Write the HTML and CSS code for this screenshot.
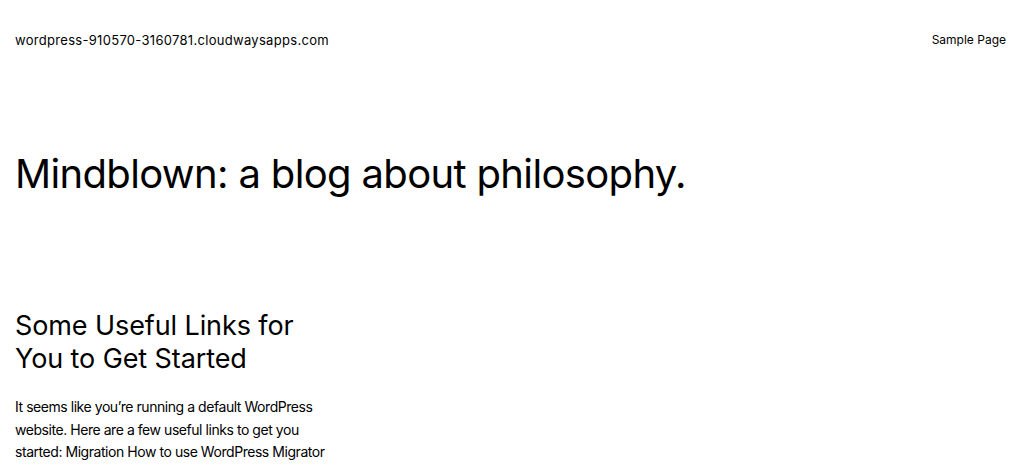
FILE: index.html
```html
<!DOCTYPE html>
<html lang="en">
<head>
<meta charset="utf-8">
<title>Mindblown</title>
<link rel="stylesheet" href="styles.css">
</head>
<body>
<header class="site-header">
  <a class="site-title" href="#">wordpress-910570-3160781.cloudwaysapps.com</a>
  <nav class="site-nav"><a href="#">Sample Page</a></nav>
</header>
<main class="content">
  <h1 class="page-title">Mindblown: a blog about philosophy.</h1>
  <article class="post">
    <h2 class="post-title">Some Useful Links for You to Get Started</h2>
    <p class="post-excerpt">It seems like you’re running a default WordPress website. Here are a few useful links to get you started: Migration How to use WordPress Migrator</p>
  </article>
</main>
</body>
</html>
```
FILE: styles.css
```css
html, body {
  margin: 0;
  padding: 0;
  background: #fff;
  color: #000;
  font-family: Inter, "Noto Sans", sans-serif;
}
a { color: inherit; text-decoration: none; }
.site-header {
  display: flex;
  justify-content: space-between;
  align-items: center;
  padding: 31px 18px 0 15px;
  font-size: 13px;
  line-height: 18px;
}
.site-title {
  letter-spacing: 0.3px;
}
.site-nav {
  font-size: 12px;
}
.content {
  padding: 0 15px;
}
.page-title {
  margin: 0;
  padding-top: 101px;
  font-size: 40px;
  font-weight: 400;
  line-height: 48px;
  letter-spacing: -0.65px;
}
.post {
  margin-top: 111px;
  width: 330px;
}
.post-title {
  margin: 0;
  font-size: 27px;
  font-weight: 400;
  line-height: 33px;
  letter-spacing: -0.1px;
  max-width: 300px;
}
.post-excerpt {
  margin: 21px 0 0;
  font-size: 14px;
  line-height: 22.5px;
  letter-spacing: -0.45px;
}
```
